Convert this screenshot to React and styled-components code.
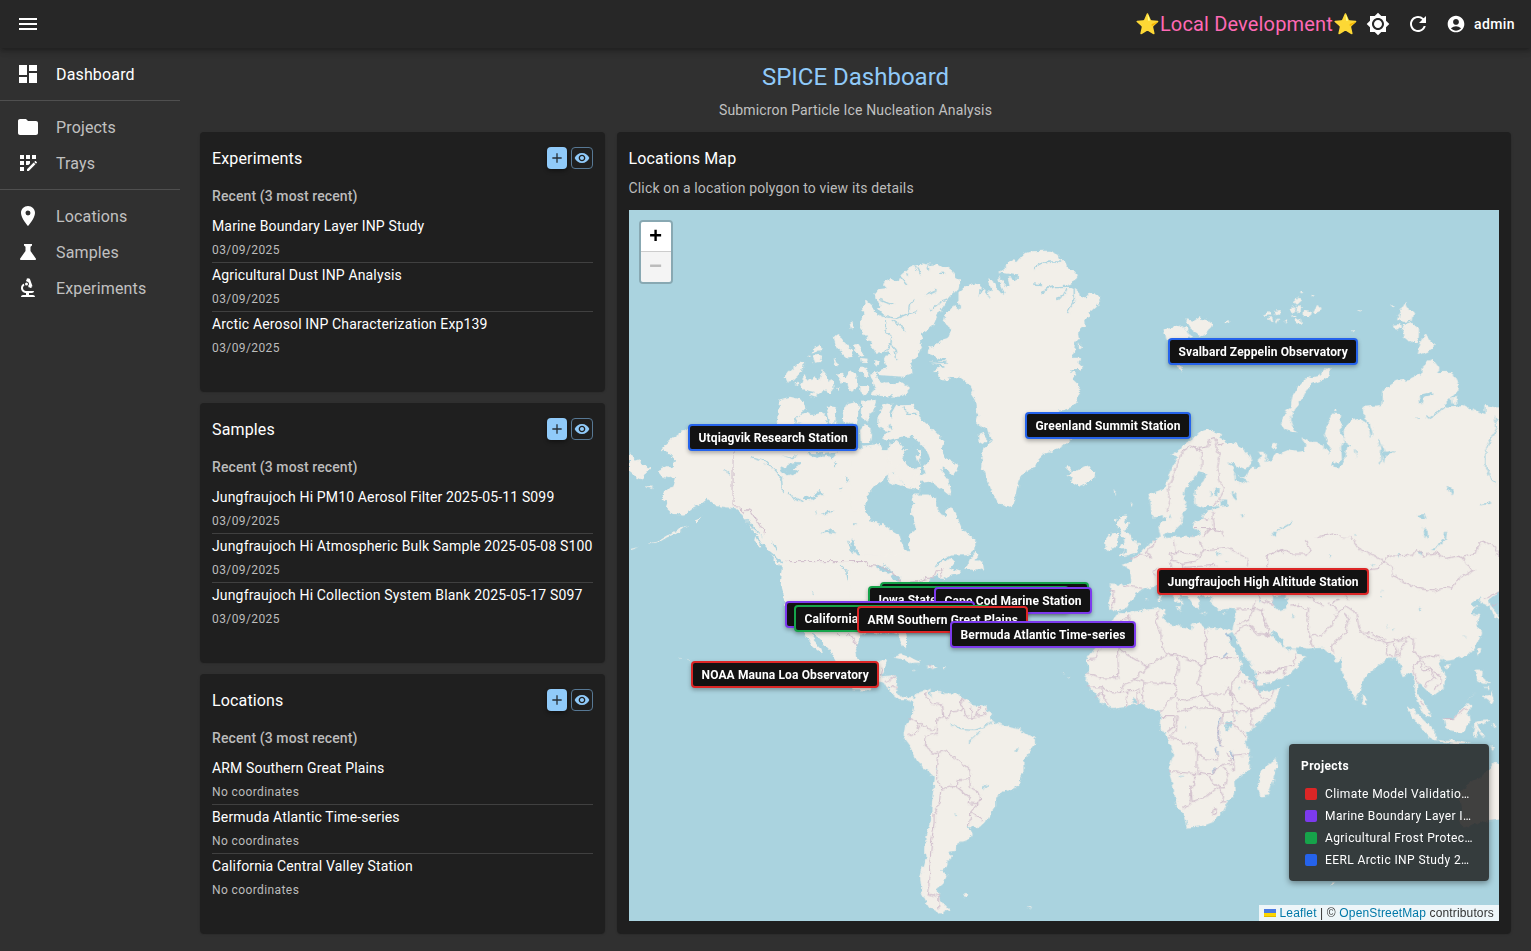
import React from 'react';
import styled, { createGlobalStyle } from 'styled-components';
import {
  MdMenu, MdDashboard, MdFolder, MdAppRegistration, MdLocationOn, MdBiotech,
  MdBrightness7, MdRefresh, MdAccountCircle, MdAdd, MdVisibility,
} from 'react-icons/md';

const GlobalStyle = createGlobalStyle`
  *, *::before, *::after { box-sizing: border-box; }
  body {
    margin: 0;
    background: #303030;
    color: #fff;
    font-family: Roboto, "Liberation Sans", sans-serif;
    font-size: 14px;
    line-height: 20px;
    letter-spacing: 0.01071em;
  }
  h1, h2, h3, p, ul { margin: 0; padding: 0; font-weight: 400; }
  ul { list-style: none; }
  a { color: inherit; text-decoration: none; }
  button { font: inherit; color: inherit; border: 0; padding: 0; background: none; cursor: pointer; }
`;

const AppBar = styled.header`
  position: sticky;
  top: 0;
  z-index: 20;
  display: flex;
  align-items: center;
  height: 48px;
  padding: 0 16px 0 8px;
  background: #272727;
  box-shadow: 0 2px 4px -1px rgba(0, 0, 0, 0.2), 0 4px 5px rgba(0, 0, 0, 0.14), 0 1px 10px rgba(0, 0, 0, 0.12);
`;

const IconButton = styled.button`
  display: flex;
  align-items: center;
  justify-content: center;
  width: 40px;
  height: 40px;
  border-radius: 50%;
`;

const EnvLabel = styled.p`
  margin-left: auto;
  color: #ff69b4;
  font-size: 20px;
  line-height: 32px;
  letter-spacing: 0.0075em;
`;

const UserButton = styled.button`
  display: flex;
  align-items: center;
  gap: 8px;
  height: 32px;
  margin-left: 8px;
  font-weight: 500;
  letter-spacing: 0.02857em;
`;

const Layout = styled.div`
  display: flex;
  min-height: calc(100vh - 48px);
`;

const Sidebar = styled.nav`
  flex: none;
  width: 180px;
  padding-top: 8px;
`;

const NavGroup = styled.ul`
  padding-bottom: 8px;
  margin-bottom: 8px;
  border-bottom: ${(p) => (p.$last ? '0' : '1px solid #4f4f4f')};
`;

const NavLink = styled.a`
  display: flex;
  align-items: center;
  gap: 16px;
  height: 36px;
  padding: 0 16px;
  font-size: 16px;
  line-height: 24px;
  letter-spacing: 0.00938em;
  color: ${(p) => (p.$active ? '#fff' : '#c1c1c1')};
  svg { color: #fff; flex: none; }
  span { padding-top: 2px; }
`;

const Main = styled.main`
  flex: 1;
  min-width: 0;
  padding: 13px 20px 16px;
`;

const PageTitle = styled.h1`
  color: #90caf9;
  font-size: 24px;
  line-height: 32px;
  letter-spacing: 0;
  text-align: center;
`;

const PageSubtitle = styled.p`
  margin: 7px 0 12px;
  color: #c1c1c1;
  text-align: center;
`;

const Board = styled.div`
  display: grid;
  grid-template-columns: auto minmax(0, 1fr);
  gap: 12px;
  min-height: calc(100vh - 150px);
`;

const CardColumn = styled.div`
  display: grid;
  grid-auto-rows: 1fr;
  gap: 12px;
`;

const Card = styled.section`
  display: flex;
  flex-direction: column;
  padding: 12px;
  border-radius: 4px;
  background: #1f1f1f;
  box-shadow: 0 2px 1px -1px rgba(0, 0, 0, 0.2), 0 1px 1px rgba(0, 0, 0, 0.14), 0 1px 3px rgba(0, 0, 0, 0.12);
`;

const CardHeader = styled.header`
  display: flex;
  align-items: center;
  height: 28px;
`;

const CardTitle = styled.h2`
  flex: 1;
  padding-top: 2px;
  font-size: 16px;
  line-height: 26px;
  letter-spacing: 0.0094em;
`;

const SmallButton = styled.button`
  display: flex;
  align-items: center;
  justify-content: center;
  width: ${(p) => (p.$outlined ? 22 : 20)}px;
  height: 22px;
  margin-left: 4px;
  border-radius: 4px;
  border: ${(p) => (p.$outlined ? '1px solid #577894' : '0')};
  background: ${(p) => (p.$outlined ? 'transparent' : '#90caf9')};
  color: ${(p) => (p.$outlined ? '#90caf9' : '#272f36')};
  box-shadow: ${(p) => (p.$outlined ? 'none' : '0 2px 4px rgba(0, 0, 0, 0.4)')};
`;

const ListHeading = styled.h3`
  margin: 12px 0 6px;
  color: #bcbcbc;
  font-size: 14px;
  font-weight: 500;
  line-height: 24px;
  letter-spacing: 0.00714em;
`;

const Entry = styled.li`
  height: 49px;
  border-bottom: 1px solid #404040;
  &:last-child { border-bottom: 0; }
`;

const EntryTitle = styled.a`
  display: block;
  line-height: 24px;
  white-space: nowrap;
`;

const EntryMeta = styled.p`
  color: #bcbcbc;
  font-size: 12px;
  line-height: 24px;
  letter-spacing: 0.03333em;
`;

const MapHint = styled.p`
  margin: 6px 0 12px;
  color: #bcbcbc;
`;

const MapFrame = styled.div`
  position: relative;
  flex: 1;
  min-height: 400px;
  overflow: hidden;
  background: #aad3df;
`;

const WorldSvg = styled.svg`
  position: absolute;
  inset: 0;
  width: 100%;
  height: 100%;
`;

const ZoomControl = styled.div`
  position: absolute;
  top: 10px;
  left: 10px;
  border: 2px solid rgba(0, 0, 0, 0.2);
  border-radius: 4px;
  background-clip: padding-box;
`;

const ZoomButton = styled.button`
  display: block;
  width: 30px;
  height: 30px;
  padding-top: 2px;
  border-bottom: ${(p) => (p.$last ? '0' : '1px solid #ccc')};
  border-radius: ${(p) => (p.$last ? '0 0 2px 2px' : '2px 2px 0 0')};
  background: ${(p) => (p.disabled ? '#f4f4f4' : '#fff')};
  color: ${(p) => (p.disabled ? '#bbb' : '#000')};
  font: bold 22px/28px "Liberation Mono", monospace;
  letter-spacing: 0;
`;

const Pin = styled.button`
  position: absolute;
  top: ${(p) => p.$y}px;
  left: ${(p) => p.$x}px;
  height: 27px;
  padding: 0 8px 0 9px;
  border: 2px solid ${(p) => p.$color};
  border-radius: 4px;
  background: #121212;
  box-shadow: 0 2px 4px rgba(0, 0, 0, 0.3);
  font-size: 12px;
  font-weight: 700;
  line-height: 22px;
  letter-spacing: 0.01071em;
  white-space: nowrap;
`;

const Legend = styled.aside`
  position: absolute;
  right: 10px;
  bottom: 40px;
  width: 200px;
  padding: 12px 12px 11px;
  border-radius: 4px;
  background: rgba(33, 33, 33, 0.85);
  box-shadow: 0 2px 6px rgba(0, 0, 0, 0.4);
  font-size: 12px;
  letter-spacing: 0.03333em;
`;

const LegendTitle = styled.h3`
  margin-bottom: 8px;
  font-size: 12px;
  font-weight: 700;
  line-height: 20px;
`;

const LegendItem = styled.li`
  display: flex;
  align-items: center;
  gap: 8px;
  height: 20px;
  margin-bottom: 2px;
  padding: 0 4px;
  &:last-child { margin-bottom: 0; }
  span { overflow: hidden; text-overflow: ellipsis; white-space: nowrap; }
`;

const Swatch = styled.i`
  flex: none;
  width: 12px;
  height: 12px;
  border-radius: 2px;
  background: ${(p) => p.$color};
`;

const Attribution = styled.footer`
  position: absolute;
  right: 0;
  bottom: 0;
  height: 16px;
  padding: 0 5px;
  background: rgba(255, 255, 255, 0.8);
  color: #333;
  font: 12px/16px "Liberation Sans", Arial, sans-serif;
  a { color: #0078a8; }
`;

const RED = '#dc2626';
const PURPLE = '#7c3aed';
const GREEN = '#16a34a';
const BLUE = '#2563eb';

const cards = [
  {
    title: 'Experiments',
    entries: [
      ['Marine Boundary Layer INP Study', '03/09/2025'],
      ['Agricultural Dust INP Analysis', '03/09/2025'],
      ['Arctic Aerosol INP Characterization Exp139', '03/09/2025'],
    ],
  },
  {
    title: 'Samples',
    entries: [
      ['Jungfraujoch Hi PM10 Aerosol Filter 2025-05-11 S099', '03/09/2025'],
      ['Jungfraujoch Hi Atmospheric Bulk Sample 2025-05-08 S100', '03/09/2025'],
      ['Jungfraujoch Hi Collection System Blank 2025-05-17 S097', '03/09/2025'],
    ],
  },
  {
    title: 'Locations',
    entries: [
      ['ARM Southern Great Plains', 'No coordinates'],
      ['Bermuda Atlantic Time-series', 'No coordinates'],
      ['California Central Valley Station', 'No coordinates'],
    ],
  },
];

const pins = [
  { name: 'Svalbard Zeppelin Observatory', x: 539, y: 128, color: BLUE },
  { name: 'Greenland Summit Station', x: 396, y: 202, color: BLUE },
  { name: 'Utqiagvik Research Station', x: 59, y: 214, color: BLUE },
  { name: 'Jungfraujoch High Altitude Station', x: 528, y: 358, color: RED },
  { name: 'Great Lakes Agricultural Research', x: 251, y: 372, color: GREEN },
  { name: 'Iowa State Agricultural Field Site', x: 239, y: 376, color: GREEN },
  { name: 'Cape Cod Marine Station', x: 305, y: 377, color: PURPLE },
  { name: 'Bodega Bay Marine Laboratory', x: 156, y: 391, color: PURPLE },
  { name: 'California Central Valley Station', x: 165, y: 395, color: GREEN },
  { name: 'ARM Southern Great Plains', x: 228, y: 396, color: RED },
  { name: 'Bermuda Atlantic Time-series', x: 321, y: 411, color: PURPLE },
  { name: 'NOAA Mauna Loa Observatory', x: 62, y: 451, color: RED },
];

const legend = [
  ['Climate Model Validation Study', RED],
  ['Marine Boundary Layer INP Study', PURPLE],
  ['Agricultural Frost Protection', GREEN],
  ['EERL Arctic INP Study 2025', BLUE],
];

// Each region is drawn on its own grid, three units to a map pixel.
const regions = [
  {
    name: 'north-america', x: -9, y: 190,
    land: [
      'M205,85 180,100 150,120 136,134 122,152 150,160 165,185 160,204 140,198 110,212 122,228 145,234 168,228 160,262 135,270 128,296 145,308 140,322 160,340 185,346 200,345 210,332 222,322 245,310 262,296 275,306 290,318 325,322 345,324 370,345 385,370 400,392 412,408 430,432 448,452 470,470 490,490 484,530 482,560 492,600 500,640 530,680 556,700 580,740 606,762 600,742 578,716 576,700 600,716 625,745 648,785 700,870 750,870 775,850 780,800 745,810 725,800 708,775 712,735 716,706 745,696 780,702 820,696 840,704 850,736 858,738 856,700 846,660 900,600 900,590 900,150 720,150 690,100 650,120 470,110 350,100z',
      'M27,160 45,182 60,178 66,196 92,205 78,216 72,226 70,240 50,232 27,214z', 'M75,258 100,260 100,266 78,262z',
      'M30,446 60,440 30,450z M85,432 110,430 140,412 172,398 205,372 170,388 140,406 110,424z M225,360 245,350 228,372z',
      'M408,408 424,438 418,442 406,422z M448,462 490,494 496,506 470,490z M776,780 800,780 798,792 792,806 780,830 770,830z',
      'M470,110 480,0 545,0 558,20 525,60 527,80 560,60 600,60 620,65 640,100 660,90 690,100 700,150 480,150z',
      'M820,772 850,764 900,785 895,790 860,780z M620,15 640,28 645,60 628,60z M670,40 690,15 715,20 712,60 690,75 668,60z M178,772 184,774 180,775z M196,778 214,786 205,784z',
    ],
    water: [
      'M480,205 500,210 505,195 530,188 540,192 520,205 538,215 500,228 485,215z M480,166 510,172 530,165 520,178z',
      'M548,292 575,288 600,272 610,284 585,292 560,306z M560,158 600,160 650,155 640,175 610,165 590,176z M595,345 620,332 645,332 625,340z M582,330 590,332 588,345z',
      'M692,418 702,422 710,440 700,448 690,438z M702,446 718,450 714,468z M680,420 690,432 700,462 690,450z M757,512 775,498 800,490 815,505 800,515 775,510z M795,530 815,522 820,540 805,546 800,545z M822,515 850,528 842,545 826,530z',
      'M736,300 750,275 770,250 800,228 820,215 860,260 900,270 900,300 872,320 886,345 882,372 862,398 872,425 865,452 850,440 845,405 810,375 770,366 748,350 736,332z',
      'M575,572 585,582 578,584z M600,398 625,388 650,400 620,396z M720,265 735,270 725,276z M656,265 668,262 662,270z M700,225 715,222 708,230z M675,232 690,240 680,242z M640,188 652,196 642,198z M700,370 715,374 706,378z',
      'M720,0 742,0 752,70 770,120 760,150 735,140z M768,0 776,0 788,70 830,90 890,100 900,120 840,110 800,120 780,100z M840,170 890,130 900,200 870,205z M530,90 600,70 660,100 650,110 590,90 540,110z M370,350 392,368 430,410 400,385z',
    ],
    border: ['M339,150 339,316 352,318 372,340 386,326 408,358 420,378 434,388 432,402', 'M494,484 732,484 736,490 760,492 800,496 825,516 838,535 845,560 900,540', 'M648,700 658,706 672,702 686,715 696,735 712,738', 'M790,840 805,852 828,838', 'M800,850 815,870 835,888'],
    rivers: ['M395,170 430,180 460,210 488,240 490,275', 'M310,208 330,222', 'M455,425 470,450', 'M660,495 680,510 684,540', 'M500,280 550,305'],
  },
  {
    name: 'arctic-islands', x: -9, y: -80,
    land: [
      'M494,742 505,725 520,712 540,694 552,700 545,722 535,738 520,752 500,754z M526,762 536,752 538,766z',
      'M540,768 548,744 556,735 565,752 578,738 600,752 608,720 620,735 622,755 638,750 641,775 628,790 610,782 595,792 582,802 566,796 582,786 550,778z',
      'M574,672 582,660 580,655 598,643 608,660 590,662z M576,680 600,672 606,680 600,696 582,698z M560,680 572,680 568,686z',
      'M641,622 652,615 662,622 672,636 680,642 694,662 694,680 680,682 668,672 650,655z M702,645 715,642 730,662 732,678 718,680 706,665z M688,580 698,576 700,592 692,600z M638,684 646,690 652,710 642,704z M720,684 746,686 742,696 722,695z M764,690 776,696 770,706 762,700z',
      'M650,730 668,728 676,740 685,727 708,728 710,768 696,785 688,776 682,760 665,758z M648,770 656,772 654,782z M718,714 735,712 748,724 740,740 722,730z M718,768 740,768 744,792 728,796z',
      'M470,878 478,808 510,800 545,808 558,832 530,860 524,880z M528,880 540,852 560,848 575,855 600,848 618,860 620,880z M618,840 635,826 650,828 645,880 628,880z M668,850 680,822 712,814 718,836 706,880 685,880z',
      'M726,815 770,812 766,832 745,848 745,878 725,860z M784,880 774,850 786,826 805,820 818,826 808,850 815,880z M816,850 830,826 880,824 895,860 930,890 815,890z',
    ],
  },
  {
    name: 'greenland', x: 221, y: 0,
    land: [
      'M443,186 455,180 466,170 484,154 498,156 512,140 520,132 545,124 580,122 598,122 625,134 632,150 645,152 650,168 670,180 683,195 672,214 650,225 672,235 690,250 692,262 706,262 720,247 740,252 753,268 735,292 715,310 718,322 702,330 704,348 683,368 686,385 674,400 672,420 668,440 690,440 685,460 696,470 690,480 662,480 675,492 668,505 684,520 682,535 690,545 680,560 684,575 670,590 640,600 622,602 680,620 690,660 660,690 640,708 620,718 582,732 568,745 558,768 530,786 512,796 505,812 498,845 485,890 478,893 460,882 445,880 425,845 412,808 405,785 395,775 397,758 393,740 400,715 420,700 425,695 412,650 400,655 392,650 378,640 384,618 378,600 374,570 362,552 368,545 355,520 330,502 310,500 290,508 270,507 258,496 262,486 245,485 262,474 285,466 255,462 235,458 285,452 270,444 233,430 234,412 265,402 272,390 292,384 303,360 300,344 278,336 282,316 302,300 312,284 330,297 325,270 325,250 345,232 360,226 380,216 390,222 385,262 396,238 405,240 420,262 414,240 426,246 411,208 430,215 446,245 465,258 458,235 446,210 444,198 470,232 480,220 475,200 500,212 500,196z',
      'M70,250 85,238 110,235 98,222 125,205 145,215 152,195 175,175 200,165 215,160 240,165 260,163 280,175 292,172 310,185 315,200 330,212 325,235 300,260 265,310 250,345 230,360 210,370 216,385 205,400 215,405 200,440 180,455 185,470 187,490 160,500 85,495 80,485 112,472 100,452 106,440 122,436 110,425 75,428 60,408 66,395 48,390 46,375 30,355 35,345 28,330 40,315 35,290 50,272 65,285 75,310 100,322 82,298 95,285 75,270z',
      'M60,490 80,488 82,505 105,520 150,517 172,525 173,550 150,560 95,558 65,552 72,530z M30,540 42,525 54,540 50,555 35,553z M12,405 24,402 40,424 40,438 22,434z M28,474 45,474 58,488 50,500 32,490z M0,490 18,486 20,535 0,545z M72,450 85,456 82,466 74,464z',
      'M84,650 86,605 100,588 128,580 115,610 116,648 130,665 100,660z',
      'M128,610 140,588 160,586 190,590 205,608 215,640 240,650 262,672 280,695 275,715 292,745 328,768 318,785 308,798 298,782 282,772 272,780 292,805 302,860 272,835 250,820 240,812 210,815 188,808 188,792 210,795 226,785 220,770 240,750 230,722 205,695 185,680 150,680 110,692 92,678 130,660 120,640z',
      'M36,578 80,575 72,600 52,614 38,605z M30,660 48,640 66,672 62,700 32,700z M0,580 22,580 20,620 0,640z M112,740 118,700 140,690 158,710 155,740 140,770 130,780z M118,785 140,790 165,828 150,830 135,818 112,828z M196,738 208,730 212,745 200,752z M0,740 40,710 90,705 110,745 105,800 60,830 40,900 0,900z M138,845 150,842 146,852z M168,850 176,852 172,858z',
      'M384,675 398,668 415,690 400,705 385,695z M686,395 692,410 686,415z',
    ],
    rivers: ['M574,250 590,236 610,230 650,229 670,229', 'M618,266 640,258 650,235', 'M652,312 660,290 672,270 672,235', 'M548,176 575,160 600,156 630,156', 'M548,222 575,224', 'M75,295 100,318 140,325 180,308 200,302', 'M175,308 178,285 192,270', 'M228,255 262,240', 'M240,300 270,276 300,266', 'M110,330 108,365 125,380 122,400 100,430', 'M125,330 150,345 165,362', 'M120,400 135,420 140,450', 'M195,170 210,192', 'M232,165 238,180', 'M150,200 170,222', 'M90,268 130,285', 'M160,590 170,610 200,610', 'M170,190 172,200', 'M285,190 270,190', 'M236,460 290,456'],
  },
  {
    name: 'north-atlantic', x: 221, y: 230,
    land: [
      'M186,170 192,160 235,160 258,175 258,200 270,222 286,228 292,200 302,195 312,218 325,240 335,265 352,282 375,300 376,325 350,345 300,346 268,362 250,385 282,362 305,352 312,366 300,382 330,392 332,400 298,408 278,420 262,402 232,426 200,480 160,500 0,500 0,345 100,345 175,335 178,305 195,268 192,240 178,212 192,192z',
      'M345,385 354,368 362,350 375,335 385,345 375,358 398,368 402,392 392,385 370,390z',
      'M645,82 652,78 662,94 672,96 690,86 715,78 722,90 735,98 732,112 710,130 690,140 672,132 660,124 668,112 645,104 664,98z',
      'M808,228 832,226 824,244 836,246 832,262 820,270 836,276 845,305 865,320 858,338 832,345 806,348 828,330 808,325 812,312 826,310 824,292 806,290 812,272 800,262 802,240z M770,296 782,280 800,278 802,296 796,322 765,328 776,312z M790,235 796,232 794,250z M790,152 796,152 794,168z M838,188 844,186 842,198z',
    ],
    water: [
      'M42,205 50,180 66,158 88,140 110,130 130,140 160,150 190,160 180,185 190,200 180,215 192,242 196,266 172,288 178,305 175,335 162,325 152,300 146,282 122,268 100,252 65,245 55,225z',
      'M75,380 85,372 110,380 130,395 120,400 90,390z M125,405 150,408 146,425 128,422z M0,320 16,325 28,345 20,345z',
    ],
    border: ['M0,364 42,364 60,376 100,380 130,398 148,418 155,428 200,424 230,414 250,414 258,392 272,385 276,410'],
  },
  {
    name: 'northern-eurasia', x: 501, y: 50,
    land: [
      'M55,715 62,700 90,690 105,675 118,640 130,610 140,592 124,584 150,568 158,556 190,535 208,518 235,510 250,514 275,522 270,535 290,545 320,555 350,578 363,600 360,618 345,628 320,618 290,606 312,625 312,640 345,655 356,632 372,620 390,620 385,600 392,590 385,575 402,575 410,590 405,605 425,600 440,582 470,570 500,575 522,572 525,560 514,530 535,545 560,545 580,562 597,582 600,560 590,545 583,520 592,495 605,460 632,462 630,490 632,520 640,540 632,560 635,600 600,610 610,620 628,622 645,595 650,560 672,562 682,598 678,570 640,545 640,505 665,480 690,475 712,492 722,535 726,520 718,490 702,475 700,440 752,435 756,392 775,378 800,362 840,356 876,340 876,322 900,298 915,308 928,326 920,336 965,335 983,370 980,395 945,430 950,440 1000,435 1028,450 1065,462 1065,435 1090,440 1125,445 1125,910 0,910 10,890 30,880 60,846 92,832 84,800 88,788 104,785 100,765 72,772 60,755z',
      'M100,208 135,202 155,194 172,210 185,235 155,240 106,240z M165,178 188,182 205,172 235,178 244,196 232,215 215,230 200,220 180,205z M280,186 296,180 296,188 284,192z M136,316 158,316 155,338z',
      'M398,164 414,156 420,166 404,168z M428,152 452,150 448,162 434,166z M412,176 424,170 430,186 418,184z M436,176 448,172 440,192z M475,150 488,138 496,146 484,160z M490,124 504,112 512,124 500,134z M500,140 514,138 510,156 498,154z M480,168 492,164 496,174z M520,152 542,156 538,172 520,170z M548,155 560,135 570,140 568,155 552,162z M490,180 512,178 514,192 494,190z M506,96 518,96 514,104z M546,104 556,106 548,110z M684,150 696,153 688,158z M460,180 470,178 468,188z',
      'M782,134 792,132 790,140z M804,165 828,128 836,150 848,155 844,182 818,186 800,180z M790,195 805,192 812,202 800,212z M815,195 845,185 866,205 864,248 845,250 822,230z M862,286 872,240 888,225 910,255 908,270 888,275z M660,212 672,216 668,220z',
      'M451,495 465,450 480,440 488,400 510,370 540,350 565,345 585,325 600,328 598,348 580,358 545,372 525,395 510,425 490,450 482,480 492,505 502,520 465,510z M424,560 432,550 440,556 434,568 424,566z M608,450 618,444 622,456z M514,528 528,538 522,544z M964,412 976,410 978,432 966,430z',
    ],
    water: [
      'M205,632 228,640 220,665 196,690 194,730 215,742 245,740 262,735 268,742 230,752 217,758 220,775 195,782 188,798 208,820 190,834 150,830 118,835 98,832 110,815 132,816 152,795 155,770 170,745 160,710 164,685 190,660z',
      'M270,718 290,718 290,738 272,740z M305,690 322,708 318,724 306,712z M252,684 265,690 262,710 254,704z M240,690 246,700 240,710z M118,756 124,775 118,770z M310,640 352,662 334,672 314,658z',
      'M898,868 922,862 940,840 944,812 950,812 946,842 925,865 902,872z M865,405 905,395 905,405 880,410 878,430 868,424z M756,550 762,575 795,570 765,590 760,610 756,585z M948,680 970,688 962,706z M330,762 345,768 338,772z M425,815 440,815 430,845z M858,474 866,474 862,480z M672,818 678,822 674,828z M860,765 880,762 885,780 870,775z M878,800 892,810 892,842 882,825z M798,882 806,884 804,894z M598,882 602,886 600,890z',
    ],
    rivers: ['M1094,470 1100,500 1080,540 1066,570 1066,620 1080,655 1098,670', 'M890,475 920,458 945,436', 'M745,540 755,570 750,610', 'M1052,734 1082,728', 'M440,812 470,795 485,786'],
    border: [
      'M110,755 118,725 112,690 130,650 140,610 155,578 190,555 215,580 214,628', 'M190,555 200,565 235,560 238,540 252,535 262,545 256,560 268,590 262,620 268,660 282,690 265,720 250,735', 'M262,555 280,550',
      'M250,755 246,780 222,775', 'M246,780 250,808 232,802 195,802', 'M232,805 240,808 210,840 185,830', 'M250,808 272,812 290,845 280,862 250,868 215,872 212,840', 'M62,900 66,860 74,846', 'M132,840 138,876 165,884 205,898 214,872', 'M118,885 138,876', 'M280,862 300,875 320,885 355,900', 'M0,898 40,880 62,888', 'M412,900 430,880 450,870 485,884 522,880 540,870 532,840 560,832 605,818 625,830 660,832 690,878 720,882 740,895 780,888 850,885 855,868 890,870 905,892 940,898 1000,890 1036,895 1040,855 1060,844 1090,850 1107,890',
    ],
  },
  {
    name: 'europe-africa', x: 411, y: 330,
    land: [
      'M350,0 335,15 305,40 290,62 262,68 244,74 270,90 273,130 240,134 208,133 214,160 203,185 208,208 232,214 254,206 262,190 280,178 284,162 310,148 340,138 358,130 375,125 395,165 425,195 420,205 430,192 412,165 440,165 462,198 474,205 480,195 470,170 512,168 512,190 535,210 560,206 588,208 582,240 576,270 540,265 495,262 470,250 455,252 452,270 430,262 385,250 368,236 376,208 355,205 300,210 262,220 232,218 214,248 190,275 170,310 145,350 138,358 146,385 136,418 150,445 180,480 200,498 215,507 260,500 300,488 330,506 362,512 358,560 385,595 400,640 384,690 398,735 408,795 430,825 440,862 485,858 520,845 550,810 562,785 584,762 582,722 628,685 628,640 616,600 620,580 660,545 700,500 718,446 655,456 640,430 605,395 600,360 580,325 558,285 576,275 590,300 612,345 640,385 655,438 700,425 748,402 775,378 792,350 770,340 762,322 745,336 720,310 693,285 696,272 735,302 775,318 800,325 850,322 870,340 888,365 930,330 930,-10 350,-10z',
      'M705,650 712,680 695,730 684,765 660,768 652,735 658,710 662,690 690,672z M195,0 228,0 225,22 196,30z M250,0 285,0 297,15 290,30 240,48 262,36z M355,165 365,165 363,184 356,182z M404,200 422,202 420,212z M480,218 500,218 492,222z M545,220 560,218 552,224z M315,176 322,178 318,182z M738,436 748,438 742,442z',
    ],
    water: [
      'M700,168 730,165 744,182 738,205 710,208 698,190z M552,545 572,543 574,560 556,570z M418,706 426,708 420,712z M758,222 764,230 758,236z M276,470 288,478 286,490 278,484z M586,508 594,520 588,522z M437,556 440,566 435,564z M598,440 604,446 598,448z M525,36 545,40 530,44z M552,62 566,64 560,66z M656,176 662,180 658,188z',
    ],
    lakes: ['M540,530 534,560 534,590 544,618', 'M574,630 578,660', 'M528,620 530,640', 'M515,698 528,686', 'M556,278 572,300', 'M552,350 562,340'],
    border: [
      'M232,330 236,412 185,414 160,404 140,402', 'M232,325 320,380 382,342 365,325 362,280 348,240 355,208', 'M382,342 412,345 485,374 496,370 496,262', 'M496,352 596,352', 'M412,345 415,388 402,430 315,428 285,415 320,380', 'M315,428 308,456 306,490', 'M300,455 290,460 292,490', 'M285,415 250,432 240,458 215,458 185,440 140,440', 'M240,458 260,456 256,500', 'M260,452 298,450', 'M185,440 188,470 205,495', 'M165,470 180,462 195,470', 'M485,374 472,430 490,465 510,462 550,462 562,440 572,460 575,430 600,392', 'M402,430 410,445 400,470 378,490 360,515', 'M410,475 430,480 490,465 515,500 545,514 578,512 572,460', 'M410,490 412,515 450,505 515,502', 'M412,525 405,570 388,590', 'M362,526 405,526 400,560 380,575', 'M386,596 420,598 430,612 465,606 472,640 488,655 535,660 530,640', 'M472,640 470,695 500,700 515,700 548,672 575,670 560,640', 'M384,694 470,700', 'M548,514 545,545 532,570 536,600 550,620', 'M545,552 575,552 615,585', 'M578,512 580,545', 'M578,512 632,512 632,545 640,560', 'M572,460 590,480 632,512 690,480 700,450', 'M600,422 640,430 660,470 690,480', 'M460,700 460,735 452,740 450,790 430,806', 'M452,740 456,784 500,768 534,740 500,702', 'M534,740 552,740 562,700 548,680', 'M534,740 550,770 545,785 560,785', 'M515,808 522,802 532,810 522,822 514,814z', 'M628,640 580,645 582,690 574,680', 'M265,225 268,248 215,275', 'M265,235 240,240', 'M145,358 165,356 170,335 182,325', 'M208,150 222,152 220,190 214,208', 'M248,136 308,145', 'M350,85 335,95 345,110', 'M402,0 408,34 390,45 395,60 430,70 470,62', 'M480,0 488,30 470,60', 'M408,34 450,42 475,45', 'M488,30 560,22 625,55 620,80', 'M680,80 685,45 720,30 770,38 805,40 800,0', 'M335,15 318,36 335,52', 'M305,45 335,55', 'M345,0 335,20', 'M390,62 395,80', 'M430,68 430,82 528,76', 'M590,208 640,205 668,212', 'M582,282 600,262 630,255 660,280 692,285', 'M640,205 625,240 590,255', 'M645,180 640,205', 'M668,212 672,240 690,270', 'M650,398 700,395 735,380 760,375 765,340', 'M735,380 732,402', 'M750,198 775,195 805,208 800,240 808,290 820,320', 'M808,290 850,280 875,240 895,220 900,200', 'M770,165 830,195', 'M880,322 880,305 930,290', 'M655,165 662,180 700,195 695,180',
    ],
  },
  {
    name: 'asia', x: 621, y: 330,
    land: [
      'M100,0 765,0 765,140 715,178 720,195 740,218 745,235 732,230 715,195 690,190 692,172 670,182 658,190 668,200 688,198 665,212 662,222 690,225 680,248 692,280 680,310 650,345 610,358 585,362 575,355 564,372 585,408 582,440 552,465 546,470 530,452 508,430 500,432 502,460 515,480 530,495 540,528 530,530 510,505 495,462 490,452 494,430 485,398 460,408 440,355 408,355 390,370 338,412 332,450 318,475 305,465 275,395 272,352 258,362 240,340 220,322 100,322z',
      'M335,460 350,480 345,495 334,490z M466,498 485,505 510,530 535,555 555,572 556,602 535,590 505,555 480,520z M555,598 590,602 612,600 660,612 612,612 570,606z M583,535 610,535 632,508 650,488 662,500 655,520 658,545 635,578 610,572 590,570z M672,545 690,542 715,540 700,550 680,552 690,572 705,590 694,588 680,570 678,590 668,585z M676,330 690,322 684,350z M580,375 600,372 590,388z M678,388 694,388 692,410 705,422 720,432 700,430 680,420z M700,440 715,440 710,452z M696,468 720,462 726,450 732,480 725,495 712,480z M650,480 676,452 655,476z M722,560 735,545 738,565z M720,620 735,618 725,626z M626,760 650,735 690,712 712,688 735,665 765,675 765,835 700,845 640,865 626,850 636,810z M240,1025 252,1028 244,1036z',
    ],
    water: [
      'M68,170 100,165 115,182 108,205 82,210 68,190z M502,202 512,208 504,210z M408,256 414,262 410,262z M425,268 430,264 428,272z M642,286 646,288 643,290z M125,220 134,226 128,232z M362,70 370,75 368,80z M236,42 244,46 240,52z M505,36 514,38 508,48z M538,30 560,20 575,0 582,0 570,15 552,30z M440,44 450,42 446,56z M394,148 400,152 396,154z M390,165 396,166 392,170z',
    ],
    border: [
      'M50,80 55,45 90,28 125,42 170,42 180,32 165,0', 'M310,0 330,30 345,32 398,62 425,80 428,105 460,125 500,145 550,152 580,142 600,145 625,115 660,95 672,90 655,80 640,55 620,48 590,55 555,38 520,45 495,28 485,45 420,48 398,62', 'M398,62 385,85 350,90', 'M640,50 678,42 685,10 710,5 735,20 747,50', 'M703,178 720,165 747,155', 'M725,195 742,188',
      'M120,198 140,195 175,208 170,240 178,290 190,320', 'M178,290 220,280 250,240 265,215 290,200 320,220', 'M170,165 205,190 220,198', 'M265,180 235,190 262,208', 'M285,165 295,180', 'M250,342 245,312 285,280 295,232 282,225', 'M320,220 325,260 340,285 410,308 460,298 475,285 492,300', 'M340,275 365,280 405,300', 'M410,308 408,340 430,350', 'M430,312 440,330 436,352', 'M440,352 450,330 468,300', 'M492,300 490,330 508,352 510,362 485,375 490,400 505,430', 'M510,358 540,345 568,350', 'M512,362 530,378 550,395 570,405 568,430 548,450', 'M508,370 520,392 540,390 555,415 530,425 526,440', 'M585,535 612,535 640,508 656,506', 'M510,486 522,496', 'M18,405 30,398 70,395 100,380', 'M0,260 25,285 60,285 40,240 38,205',
    ],
  },
  {
    name: 'south-america', x: 211, y: 330,
    land: [
      'M218,482 232,458 262,448 272,442 270,458 300,452 312,460 355,460 370,475 400,495 435,500 450,520 456,540 470,548 510,560 545,570 565,585 583,592 585,612 562,645 550,662 550,695 530,742 495,750 468,772 468,798 445,830 430,850 412,864 385,856 398,882 385,900 352,906 350,928 326,932 336,948 322,962 322,975 306,988 320,1005 310,1030 292,1045 295,1070 328,1108 302,1120 265,1100 245,1060 240,1010 255,950 256,890 272,840 276,780 284,712 262,690 235,670 222,645 205,610 190,590 195,552 215,530 222,500z',
      'M110,368 140,358 134,385 120,412 165,408 172,420 168,450 185,470 205,472 220,470 224,488 205,480 180,480 150,455 145,438 118,425 90,400z M160,350 185,343 210,350 238,370 212,372 190,352z M256,378 272,374 296,382 276,390 262,384z M215,384 228,388 218,390z M308,384 322,386 312,390z M362,1062 375,1058 388,1062 372,1070z M558,1096 574,1102 574,1108z M172,276 190,278 198,320 188,318z M0,278 30,280 48,318 50,345 62,370 0,370z',
      'M668,396 676,400 670,402z M680,410 690,408 684,416z',
    ],
    water: ['M266,456 274,458 274,468 268,466z M286,680 294,684 292,690z M342,816 352,820 346,824z M44,318 60,290 110,282 170,282 185,320 130,350 115,364 70,366 52,345z', 'M240,950 260,945 256,960z'],
    border: [
      'M262,450 256,468 272,488 305,494 308,532 322,538 332,515 360,512 370,500 360,490 370,475', 'M308,532 290,540 288,580 255,590 252,615 285,640 322,630 335,650 368,670 390,690 390,715 355,718 350,740 328,738 302,748 290,700 296,640', 'M205,532 240,548 262,565 285,568', 'M240,548 225,578 205,586', 'M370,500 375,525 392,534 395,500', 'M392,534 410,528 416,500', 'M410,528 432,525 438,505', 'M350,740 388,770 384,788 410,790 422,775 410,750 390,740 390,715', 'M422,778 392,815 388,855', 'M392,815 428,842', 'M302,748 298,785 282,820 282,850 275,900 270,960 272,1000 262,1060 296,1070 296,1106', 'M15,285 30,282 50,316', 'M126,380 120,410', 'M128,425 148,418 165,410', 'M150,440 168,448', 'M268,374 274,388',
    ],
    rivers: ['M330,548 365,568 400,570 430,562 455,545', 'M385,605 415,578', 'M520,630 532,626', 'M430,745 440,732'],
  },
];

const thirds = (r) => `translate(${r.x} ${r.y}) scale(${1 / 3})`;

function WorldMap() {
  const layers = [
    ['land', { fill: '#f2efe9' }],
    ['water', { fill: '#aad3df' }],
    ['rivers', { fill: 'none', stroke: '#aad3df', strokeWidth: 4 }],
    ['lakes', { fill: 'none', stroke: '#9ab4d4', strokeWidth: 4 }],
    ['border', { fill: 'none', stroke: '#cfbccb', strokeWidth: 3, strokeLinejoin: 'round' }],
  ];
  return (
    <WorldSvg viewBox="0 0 870 711" preserveAspectRatio="xMinYMin slice" aria-hidden="true">
      <defs>
        {/* Roughens the straight outline segments into a natural coastline. */}
        <filter id="coast" filterUnits="userSpaceOnUse" x="-10" y="-10" width="890" height="731" colorInterpolationFilters="sRGB">
          <feTurbulence type="fractalNoise" baseFrequency="0.16" numOctaves="3" seed="4" result="noise" />
          <feDisplacementMap in="SourceGraphic" in2="noise" scale="6" xChannelSelector="R" yChannelSelector="G" />
        </filter>
      </defs>
      <g filter="url(#coast)">
        {regions.map((r) => (
          <g key={r.name} transform={thirds(r)}>
            {layers.map(([kind, attrs]) => (
              <g key={kind} {...attrs}>
                {(r[kind] || []).map((d) => <path key={d} d={d} />)}
              </g>
            ))}
          </g>
        ))}
      </g>
    </WorldSvg>
  );
}

function FlaskIcon({ size = 24 }) {
  return (
    <svg width={size} height={size} viewBox="0 0 24 24" fill="currentColor" aria-hidden="true">
      <path d="M8 4h8v1.500l-1.500 1.200V11l5.300 7.500c.5.700.100 1.500-.7 1.500H4.900c-.8 0-1.200-.8-.7-1.500L9.500 11V6.700L8 5.500z" />
    </svg>
  );
}

const nav = [
  [['Dashboard', MdDashboard]],
  [['Projects', MdFolder], ['Trays', MdAppRegistration]],
  [['Locations', MdLocationOn], ['Samples', FlaskIcon], ['Experiments', MdBiotech]],
];

export default function App() {
  return (
    <>
      <GlobalStyle />
      <AppBar>
        <IconButton aria-label="Toggle menu"><MdMenu size={24} /></IconButton>
        <EnvLabel>⭐Local Development⭐</EnvLabel>
        <IconButton aria-label="Toggle theme"><MdBrightness7 size={24} /></IconButton>
        <IconButton aria-label="Refresh"><MdRefresh size={24} /></IconButton>
        <UserButton><MdAccountCircle size={20} />admin</UserButton>
      </AppBar>
      <Layout>
        <Sidebar>
          {nav.map((group, i) => (
            <NavGroup key={group[0][0]} $last={i === nav.length - 1}>
              {group.map(([label, Icon]) => (
                <li key={label}>
                  <NavLink href={`#${label.toLowerCase()}`} $active={i === 0}>
                    <Icon size={24} /><span>{label}</span>
                  </NavLink>
                </li>
              ))}
            </NavGroup>
          ))}
        </Sidebar>
        <Main>
          <PageTitle>SPICE Dashboard</PageTitle>
          <PageSubtitle>Submicron Particle Ice Nucleation Analysis</PageSubtitle>
          <Board>
            <CardColumn>
              {cards.map((card) => (
                <Card key={card.title}>
                  <CardHeader>
                    <CardTitle>{card.title}</CardTitle>
                    <SmallButton aria-label={`Create ${card.title}`}><MdAdd size={16} /></SmallButton>
                    <SmallButton $outlined aria-label={`View ${card.title}`}><MdVisibility size={16} /></SmallButton>
                  </CardHeader>
                  <ListHeading>Recent (3 most recent)</ListHeading>
                  <ul>
                    {card.entries.map(([title, meta]) => (
                      <Entry key={title}>
                        <EntryTitle href="#entry">{title}</EntryTitle>
                        <EntryMeta>{meta}</EntryMeta>
                      </Entry>
                    ))}
                  </ul>
                </Card>
              ))}
            </CardColumn>
            <Card>
              <CardHeader><CardTitle>Locations Map</CardTitle></CardHeader>
              <MapHint>Click on a location polygon to view its details</MapHint>
              <MapFrame>
                <WorldMap />
                <ZoomControl>
                  <ZoomButton aria-label="Zoom in">+</ZoomButton>
                  <ZoomButton aria-label="Zoom out" $last disabled>−</ZoomButton>
                </ZoomControl>
                {pins.map((pin) => (
                  <Pin key={pin.name} $x={pin.x} $y={pin.y} $color={pin.color}>{pin.name}</Pin>
                ))}
                <Legend>
                  <LegendTitle>Projects</LegendTitle>
                  <ul>
                    {legend.map(([name, color]) => (
                      <LegendItem key={name}><Swatch $color={color} /><span>{name}</span></LegendItem>
                    ))}
                  </ul>
                </Legend>
                <Attribution>
                  <svg width="12" height="8" viewBox="0 0 12 8" aria-hidden="true">
                    <path fill="#4C7BE1" d="M0 0h12v4H0z" />
                    <path fill="#FFD500" d="M0 4h12v3H0z" />
                    <path fill="#E0BC00" d="M0 7h12v1H0z" />
                  </svg>{' '}
                  <a href="#leaflet">Leaflet</a> | © <a href="#osm">OpenStreetMap</a> contributors
                </Attribution>
              </MapFrame>
            </Card>
          </Board>
        </Main>
      </Layout>
    </>
  );
}
